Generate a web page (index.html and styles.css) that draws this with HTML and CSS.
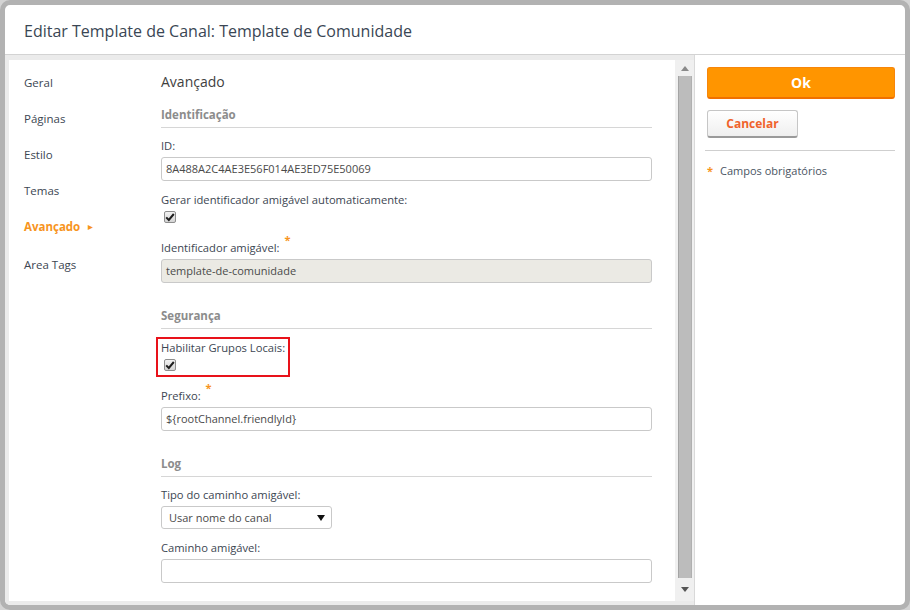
FILE: index.html
```html
<!DOCTYPE html>
<html lang="pt">
<head>
  <meta charset="UTF-8" />
  <title>Editar Template de Canal</title>
  <link rel="stylesheet" href="styles.css">
</head>
<body>
  <div class="dialog">
    <div class="dialog-header">
      <h1 class="dialog-title">Editar Template de Canal: Template de Comunidade</h1>
    </div>

    <div class="dialog-body">
      <div class="main">
        <div class="main-inner">
          <div class="content">
            <ul class="nav">
              <li>Geral</li>
              <li>Páginas</li>
              <li>Estilo</li>
              <li>Temas</li>
              <li class="active">Avançado <span class="nav-arrow">&#9654;</span></li>
              <li class="last">Area Tags</li>
            </ul>

            <div class="form">
              <h2 class="form-title">Avançado</h2>

              <div class="section first">
                <div class="section-title">Identificação</div>

                <div class="field">
                  <div class="label">ID:</div>
                  <div class="input">8A488A2C4AE3E56F014AE3ED75E50069</div>
                </div>

                <div class="field check-field">
                  <div class="label">Gerar identificador amigável automaticamente:</div>
                  <div class="checkbox">
                    <svg width="10" height="10" viewBox="0 0 10 10"><path d="M1.2 5.4 L3.8 8 L8.8 2" fill="none" stroke="#1e1e1e" stroke-width="2"/></svg>
                  </div>
                </div>

                <div class="field">
                  <div class="label">Identificador amigável: <span class="req">*</span></div>
                  <div class="input disabled">template-de-comunidade</div>
                </div>
              </div>

              <div class="section">
                <div class="section-title">Segurança</div>

                <div class="field">
                  <div class="highlight">
                    <div class="label">Habilitar Grupos Locais:</div>
                    <div class="checkbox">
                      <svg width="10" height="10" viewBox="0 0 10 10"><path d="M1.2 5.4 L3.8 8 L8.8 2" fill="none" stroke="#1e1e1e" stroke-width="2"/></svg>
                    </div>
                  </div>
                </div>

                <div class="field">
                  <div class="label">Prefixo: <span class="req">*</span></div>
                  <div class="input">${rootChannel.friendlyId}</div>
                </div>
              </div>

              <div class="section">
                <div class="section-title">Log</div>

                <div class="field">
                  <div class="label">Tipo do caminho amigável:</div>
                  <div class="select">
                    <span>Usar nome do canal</span>
                    <svg width="8" height="6" viewBox="0 0 8 6"><path d="M0 0 H8 L4 6 Z" fill="#111"/></svg>
                  </div>
                </div>

                <div class="field">
                  <div class="label">Caminho amigável:</div>
                  <div class="input"></div>
                </div>
              </div>
            </div>
          </div>

          <div class="scrollbar">
            <div class="scroll-btn">
              <svg width="8" height="5" viewBox="0 0 8 5"><path d="M0 5 H8 L4 0 Z" fill="#8a8a8a"/></svg>
            </div>
            <div class="scroll-thumb"></div>
            <div class="scroll-btn bottom">
              <svg width="8" height="5" viewBox="0 0 8 5"><path d="M0 0 H8 L4 5 Z" fill="#555"/></svg>
            </div>
          </div>
        </div>
      </div>

      <div class="side">
        <div class="btn-ok">Ok</div>
        <div class="btn-cancel">Cancelar</div>
        <div class="side-sep"></div>
        <div class="required-note"><span class="req-dot">*</span>Campos obrigatórios</div>
      </div>
    </div>
  </div>
</body>
</html>
```

FILE: styles.css
```css
:root {
  --text: #3c4652;
  --orange: #f7941d;
  --line: #d6d6d6;
}

body {
  margin: 0;
  padding: 0;
  background: #d4d4d4;
  font-family: 'Open Sans', 'Noto Sans', sans-serif;
  color: var(--text);
}

.dialog {
  width: 910px;
  height: 610px;
  box-sizing: border-box;
  border: 5px solid #b2b2b2;
  border-radius: 10px;
  background: #fff;
  display: flex;
  flex-direction: column;
  overflow: hidden;
}

.dialog-header {
  height: 49px;
  border-bottom: 1px solid #d3d3d3;
  padding-left: 19px;
  display: flex;
  align-items: center;
  flex-shrink: 0;
}

.dialog-title {
  margin: 0;
  font-size: 16px;
  font-weight: 400;
  color: #3a4654;
  padding-top: 3px;
}

.dialog-body {
  flex: 1;
  display: flex;
  min-height: 0;
}

.main {
  width: 689px;
  box-sizing: border-box;
  background: #ebebeb;
  padding: 5px 0 4px 4px;
  display: flex;
}

.main-inner {
  flex: 1;
  display: flex;
}

.content {
  flex: 1;
  background: #fff;
  display: flex;
}

/* left menu */
.nav {
  list-style: none;
  margin: 0;
  padding: 5px 0 0 15px;
  width: 137px;
  font-size: 11.5px;
}

.nav li {
  height: 36px;
  line-height: 36px;
}

.nav li.last {
  margin-top: 2px;
}

.nav li.active {
  color: var(--orange);
  font-weight: 700;
}

.nav-arrow {
  font-size: 6px;
  margin-left: 5px;
  vertical-align: 2px;
}

/* form */
.form {
  width: 491px;
  padding-top: 12px;
}

.form-title {
  margin: 0;
  font-size: 14px;
  font-weight: 400;
  line-height: 20px;
  color: #3f3f3f;
}

.section {
  margin-top: 25px;
}

.section.first {
  margin-top: 15px;
}

.section-title {
  font-size: 11.5px;
  font-weight: 700;
  color: #8c8c8c;
  line-height: 16px;
  padding-bottom: 4px;
  border-bottom: 1px solid var(--line);
  margin-bottom: 10px;
}

.field {
  margin-bottom: 11px;
}

.check-field {
  padding-bottom: 6px;
}

.label {
  font-size: 11.2px;
  line-height: 16px;
  margin-bottom: 3px;
}

.req {
  color: var(--orange);
  font-weight: 700;
  font-size: 11px;
  vertical-align: 8px;
  line-height: 0;
  margin-left: 2px;
}

.input {
  height: 24px;
  box-sizing: border-box;
  border: 1px solid #c9c9c9;
  border-radius: 3px;
  padding: 0 4px;
  font-size: 11px;
  line-height: 22px;
  color: #4a4a4a;
}

.input.disabled {
  background: #ebeae4;
}

.select {
  width: 171px;
  height: 23px;
  box-sizing: border-box;
  border: 1px solid #c9c9c9;
  border-radius: 3px;
  padding: 0 6px 0 7px;
  font-size: 11px;
  color: #4a4a4a;
  display: flex;
  align-items: center;
  justify-content: space-between;
}

.checkbox {
  width: 12px;
  height: 12px;
  box-sizing: border-box;
  margin: 2px 0 0 3px;
  border: 1px solid #8e8e8e;
  border-radius: 2px;
  background: linear-gradient(#f2f2f2, #d4d4d4);
  display: flex;
  align-items: center;
  justify-content: center;
}

.highlight {
  display: inline-block;
  margin: -2px 0 0 -5px;
  border: 2px solid #e8121a;
  padding: 1px 3px 4px 3px;
}

/* scrollbar */
.scrollbar {
  width: 19px;
  background: #f0f0f0;
  display: flex;
  flex-direction: column;
  align-items: center;
}

.scroll-btn {
  height: 16px;
  display: flex;
  align-items: center;
  justify-content: center;
}

.scroll-btn.bottom {
  height: 23px;
}

.scroll-thumb {
  flex: 1;
  width: 14px;
  box-sizing: border-box;
  margin-left: 1px;
  background: #bcbcbc;
  border-left: 1px solid #a4a4a4;
  border-right: 1px solid #b0b0b0;
}

/* right column */
.side {
  flex: 1;
  border-left: 1px solid #d9d9d9;
  padding: 12px 10px 0 12px;
}

.btn-ok {
  height: 32px;
  box-sizing: border-box;
  background: #ff9500;
  border: 1px solid #f7860a;
  border-bottom: 2px solid #f07000;
  border-radius: 3px;
  color: #fff;
  font-weight: 700;
  font-size: 14px;
  display: flex;
  align-items: center;
  justify-content: center;
}

.btn-cancel {
  width: 91px;
  height: 28px;
  box-sizing: border-box;
  margin-top: 11px;
  background: linear-gradient(#ffffff, #efefef);
  border: 1px solid #c6c6c6;
  border-bottom: 2px solid #9a9a9a;
  border-radius: 3px;
  color: #f0632c;
  font-weight: 700;
  font-size: 12px;
  display: flex;
  align-items: center;
  justify-content: center;
}

.side-sep {
  height: 1px;
  background: #cfcfcf;
  margin: 12px 0 0 -2px;
}

.required-note {
  margin-top: 12px;
  font-size: 11px;
  color: #4a5563;
}

.req-dot {
  color: var(--orange);
  font-weight: 700;
  margin-right: 7px;
}
```
